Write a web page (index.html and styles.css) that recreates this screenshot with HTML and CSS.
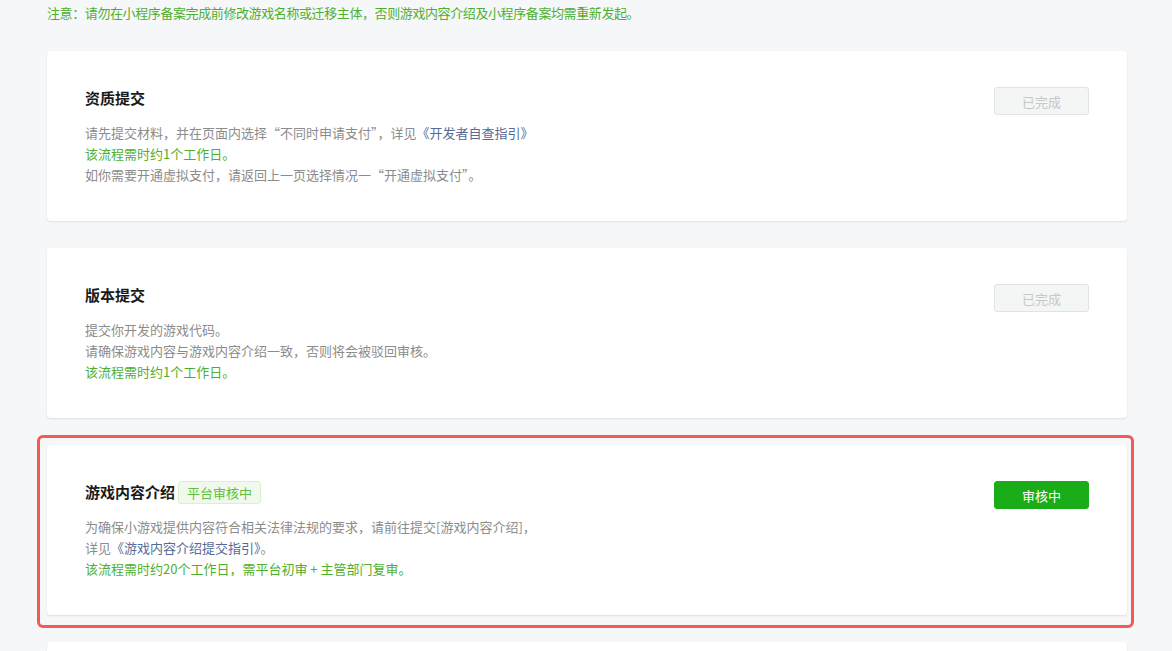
FILE: index.html
```html
<!DOCTYPE html>
<html lang="zh-CN">
<head>
  <meta charset="UTF-8">
  <title>小游戏备案流程</title>
  <link rel="stylesheet" href="styles.css">
</head>
<body>
  <div class="page">
    <p class="notice">注意：请勿在小程序备案完成前修改游戏名称或迁移主体，否则游戏内容介绍及小程序备案均需重新发起。</p>

    <!-- 资质提交 -->
    <div class="step-card">
      <div class="step-main">
        <h3 class="step-title">资质提交</h3>
        <div class="step-desc">
          <p>请先提交材料，并在页面内选择“不同时申请支付”，详见<a href="#">《开发者自查指引》</a></p>
          <p class="tips">该流程需时约1个工作日。</p>
          <p>如你需要开通虚拟支付，请返回上一页选择情况一“开通虚拟支付”。</p>
        </div>
      </div>
      <button class="btn btn-disabled" disabled>已完成</button>
    </div>

    <!-- 版本提交 -->
    <div class="step-card">
      <div class="step-main">
        <h3 class="step-title">版本提交</h3>
        <div class="step-desc">
          <p>提交你开发的游戏代码。</p>
          <p>请确保游戏内容与游戏内容介绍一致，否则将会被驳回审核。</p>
          <p class="tips">该流程需时约1个工作日。</p>
        </div>
      </div>
      <button class="btn btn-disabled" disabled>已完成</button>
    </div>

    <!-- 游戏内容介绍 -->
    <div class="step-wrap">
      <div class="step-card">
        <div class="step-main">
          <h3 class="step-title">游戏内容介绍 <span class="tag">平台审核中</span></h3>
          <div class="step-desc">
            <p>为确保小游戏提供内容符合相关法律法规的要求，请前往提交[游戏内容介绍]，</p>
            <p>详见<a href="#">《游戏内容介绍提交指引》</a>。</p>
            <p class="tips">该流程需时约20个工作日，需平台初审 + 主管部门复审。</p>
          </div>
        </div>
        <button class="btn btn-primary">审核中</button>
      </div>
      <div class="highlight"></div>
    </div>

    <div class="step-card step-next"></div>
  </div>
</body>
</html>
```

FILE: styles.css
```css
* {
  margin: 0;
  padding: 0;
  box-sizing: border-box;
}

body {
  background: #f6f7f9;
  font-family: "Noto Sans CJK SC", "Liberation Sans", sans-serif;
  color: #353535;
  height: 651px;
  overflow: hidden;
}

.page {
  width: 1080px;
  margin-left: 47px;
}

.notice {
  font-size: 13px;
  line-height: 20px;
  color: #4eaf2f;
  padding-top: 3px;
  height: 51px;
  letter-spacing: -0.4px;
}

/* step cards */
.step-card {
  display: flex;
  justify-content: space-between;
  align-items: flex-start;
  background: #fff;
  border-radius: 4px;
  box-shadow: 0 1px 2px rgba(0, 0, 0, 0.1);
  padding: 35px 38px 34px 38px;
  height: 170px;
  margin-bottom: 27px;
}

.step-title {
  font-size: 15px;
  font-weight: bold;
  color: #1a1a1a;
  line-height: 24px;
  display: flex;
  align-items: center;
  gap: 3px;
}

.step-desc {
  margin-top: 12px;
  font-size: 13px;
  line-height: 21px;
  color: #8c8c8c;
}

.step-desc a {
  color: #576b95;
  text-decoration: none;
}

.step-desc .tips {
  color: #4eaf2f;
}

.tag {
  display: inline-block;
  font-size: 13px;
  font-weight: normal;
  color: #5fbf3f;
  background: #f0f9ec;
  border: 1px solid #d9f0cf;
  border-radius: 3px;
  padding: 0 8px;
  line-height: 21px;
}

.btn {
  width: 95px;
  height: 28px;
  margin-top: 1px;
  border-radius: 3px;
  font-family: inherit;
  font-size: 13px;
}

.btn-disabled {
  background: #f4f5f5;
  border: 1px solid #e1e3e2;
  color: #c6c8c7;
}

.btn-primary {
  background: #1aad19;
  border: 1px solid #1aad19;
  color: #fff;
  cursor: pointer;
}

/* annotation frame round the current step */
.step-wrap {
  position: relative;
}

.highlight {
  position: absolute;
  left: -10px;
  top: -10px;
  right: -7px;
  bottom: -13px;
  border: 3px solid #f25a55;
  border-radius: 6px;
  pointer-events: none;
}

.step-next {
  margin-bottom: 0;
}
```
